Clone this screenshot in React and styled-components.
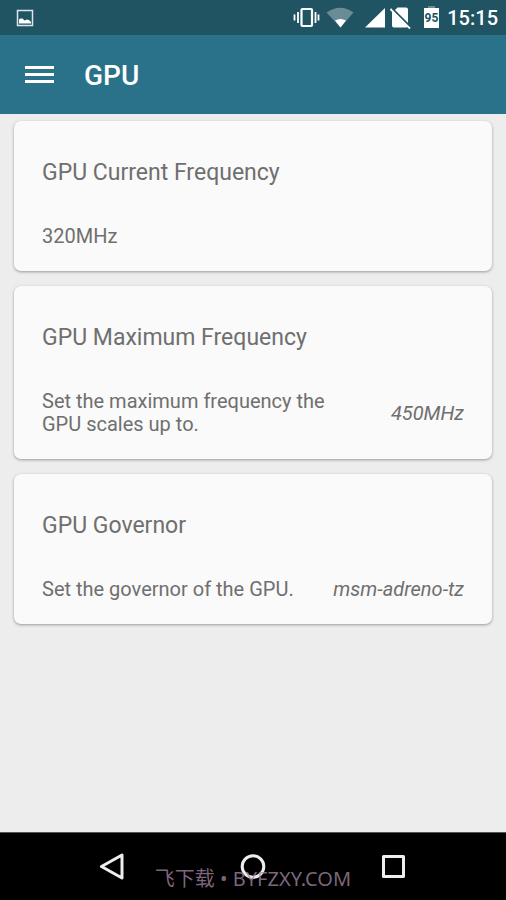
import React from "react";
import styled, { createGlobalStyle } from "styled-components";

const GlobalStyle = createGlobalStyle`
  * {
    box-sizing: border-box;
  }
  body {
    margin: 0;
    background: #ededed;
    font-family: Roboto, "Noto Sans CJK SC", sans-serif;
  }
  button {
    border: 0;
    padding: 0;
    background: none;
    color: inherit;
    font: inherit;
    cursor: pointer;
  }
  svg {
    display: block;
  }
`;

const Screen = styled.div`
  display: flex;
  flex-direction: column;
  min-height: 100vh;
`;

const StatusBar = styled.div`
  display: flex;
  align-items: center;
  justify-content: space-between;
  height: 35px;
  padding: 0 8px 0 16px;
  background: #205463;
  color: #fff;
`;

const StatusIcons = styled.div`
  display: flex;
  align-items: center;
  gap: 7px;
`;

const Clock = styled.time`
  font-size: 20px;
  font-weight: 500;
  line-height: 24px;
`;

const AppBar = styled.header`
  display: flex;
  align-items: center;
  gap: 30px;
  height: 79px;
  padding: 0 25px;
  background: #2a7289;
  color: #fff;
`;

const MenuButton = styled.button`
  display: flex;
  flex-direction: column;
  gap: 4px;
  width: 29px;
`;

const MenuLine = styled.span`
  height: 3px;
  width: 100%;
  background: #fff;
`;

const PageTitle = styled.h1`
  margin: 0;
  padding-top: 2px;
  font-size: 28px;
  font-weight: 500;
  line-height: 32px;
`;

const CardList = styled.main`
  flex: 1;
  display: flex;
  flex-direction: column;
  gap: 15px;
  padding: 7px 14px;
`;

const Card = styled.section`
  padding: 38px 28px 23px;
  border-radius: 7px;
  background: #fafafa;
  color: #6f6f6f;
  box-shadow: 0 1px 3px rgba(0, 0, 0, 0.36);
`;

const CardTitle = styled.h2`
  margin: 0 0 38px;
  font-size: 23px;
  font-weight: 400;
  line-height: 28px;
`;

const CardRow = styled.div`
  display: flex;
  align-items: center;
  justify-content: space-between;
  gap: 32px;
  font-size: 20px;
  line-height: 23px;
`;

const Description = styled.p`
  margin: 0;
`;

const ValueButton = styled.button`
  flex: none;
  font-style: italic;
`;

const NavBar = styled.nav`
  position: relative;
  display: flex;
  align-items: center;
  justify-content: center;
  gap: 112px;
  height: 68px;
  border-top: 1px solid #555;
  background: #000;
`;

const NavButton = styled.button`
  width: 28px;
  height: 28px;
`;

const Watermark = styled.span`
  position: absolute;
  left: 0;
  right: 0;
  bottom: 7px;
  text-align: center;
  font-family: "Noto Sans", "Noto Sans CJK SC", sans-serif;
  font-size: 20px;
  line-height: 28px;
  color: rgba(166, 136, 166, 0.76);
  pointer-events: none;
`;

const cards = [
  { title: "GPU Current Frequency", text: "320MHz" },
  {
    title: "GPU Maximum Frequency",
    text: "Set the maximum frequency the GPU scales up to.",
    value: "450MHz",
  },
  {
    title: "GPU Governor",
    text: "Set the governor of the GPU.",
    value: "msm-adreno-tz",
  },
];

const PictureIcon = () => (
  <svg width="18" height="18" viewBox="0 0 18 18">
    <path d="M1.5 1.5h15v15h-15z" fill="none" stroke="#dce6e8" strokeWidth="1.5" />
    <path d="M3 14.5v-4l1.500-1h2l2 2 2.500-1 2 .5 2 2v1.500z" fill="#fff" />
  </svg>
);

// vibrate, wifi, signal, no sim and battery
const TrayIcons = () => (
  <svg width="148" height="35" viewBox="292 0 148 35">
    <g fill="none" stroke="#fff" strokeWidth="2.2">
      <rect x="301.5" y="9" width="10.5" height="17" rx="1" />
      <path d="M298 12v11M294.5 14.5v6M315.5 12v11M318.5 14.5v6" strokeWidth="1.8" />
    </g>
    <path d="M326.5 12.5Q340.5 3 353.5 12.5L340.5 27.5z" fill="#698c97" />
    <path d="M335 20.5Q340.5 17.5 346 20.5L340.5 27.5z" fill="#fff" />
    <path d="M385 8v19.5h-20z" fill="#fff" />
    <path
      d="M397.5 7.500h8.500q2 0 2 2v14L394.500 10.500zM392 10.500L408 26.500q-.5 1-2 1H394q-2 0-2-2z"
      fill="#fff"
    />
    <path d="M390.5 9l19.5 19.5" stroke="#fff" strokeWidth="2" />
    <path d="M392.500 8.500l18 18" stroke="#205463" strokeWidth="1.4" />
    <path d="M428 6h7v3h-7z" fill="#698c97" />
    <path d="M424 8h15v20h-15z" fill="#fff" />
    <text
      x="431.5"
      y="22"
      textAnchor="middle"
      fontFamily="Roboto, sans-serif"
      fontSize="12"
      fontWeight="700"
      fill="#205463"
    >
      95
    </text>
  </svg>
);

const NavIcon = ({ children }) => (
  <svg
    width="28"
    height="28"
    viewBox="0 0 28 28"
    fill="none"
    stroke="#eee"
    strokeWidth="3"
    strokeLinejoin="round"
  >
    {children}
  </svg>
);

const App = () => (
  <>
    <GlobalStyle />
    <Screen>
      <StatusBar>
        <PictureIcon />
        <StatusIcons>
          <TrayIcons />
          <Clock>15:15</Clock>
        </StatusIcons>
      </StatusBar>
      <AppBar>
        <MenuButton aria-label="Menu">
          <MenuLine />
          <MenuLine />
          <MenuLine />
        </MenuButton>
        <PageTitle>GPU</PageTitle>
      </AppBar>
      <CardList>
        {cards.map((item) => (
          <Card key={item.title}>
            <CardTitle>{item.title}</CardTitle>
            <CardRow>
              <Description>{item.text}</Description>
              {item.value && <ValueButton>{item.value}</ValueButton>}
            </CardRow>
          </Card>
        ))}
      </CardList>
      <NavBar>
        <NavButton aria-label="Back">
          <NavIcon>
            <path d="M2.500 13.500L23 2v23z" />
          </NavIcon>
        </NavButton>
        <NavButton aria-label="Home">
          <NavIcon>
            <circle cx="14" cy="13.5" r="10.800" />
          </NavIcon>
        </NavButton>
        <NavButton aria-label="Recent apps">
          <NavIcon>
            <path d="M4.500 3.500h20v20h-20z" />
          </NavIcon>
        </NavButton>
        <Watermark>飞下载 • BYFZXY.COM</Watermark>
      </NavBar>
    </Screen>
  </>
);

export default App;
